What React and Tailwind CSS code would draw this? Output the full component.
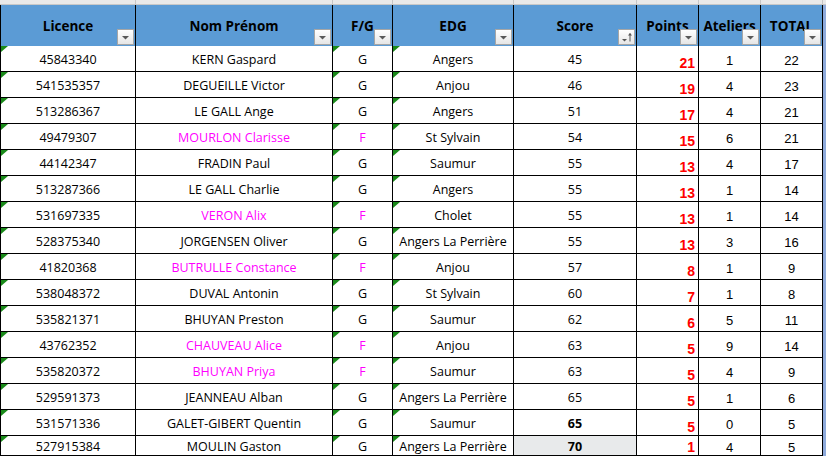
import React from "react";

const rows = [
  ["45843340", "KERN Gaspard", "G", "Angers", "45", "21", "1", "22"],
  ["541535357", "DEGUEILLE Victor", "G", "Anjou", "46", "19", "4", "23"],
  ["513286367", "LE GALL Ange", "G", "Angers", "51", "17", "4", "21"],
  ["49479307", "MOURLON Clarisse", "F", "St Sylvain", "54", "15", "6", "21"],
  ["44142347", "FRADIN Paul", "G", "Saumur", "55", "13", "4", "17"],
  ["513287366", "LE GALL Charlie", "G", "Angers", "55", "13", "1", "14"],
  ["531697335", "VERON Alix", "F", "Cholet", "55", "13", "1", "14"],
  ["528375340", "JORGENSEN Oliver", "G", "Angers La Perrière", "55", "13", "3", "16"],
  ["41820368", "BUTRULLE Constance", "F", "Anjou", "57", "8", "1", "9"],
  ["538048372", "DUVAL Antonin", "G", "St Sylvain", "60", "7", "1", "8"],
  ["535821371", "BHUYAN Preston", "G", "Saumur", "62", "6", "5", "11"],
  ["43762352", "CHAUVEAU Alice", "F", "Anjou", "63", "5", "9", "14"],
  ["535820372", "BHUYAN Priya", "F", "Saumur", "63", "5", "4", "9"],
  ["529591373", "JEANNEAU Alban", "G", "Angers La Perrière", "65", "5", "1", "6"],
  ["531571336", "GALET-GIBERT Quentin", "G", "Saumur", "65", "5", "0", "5"],
  ["527915384", "MOULIN Gaston", "G", "Angers La Perrière", "70", "1", "4", "5"],
];

const grid = "grid grid-cols-[136px_197px_60px_121px_123px_62px_62px_62px]";
const calibri = "font-['Open_Sans',sans-serif] text-[12.5px]";
const arial = "font-['Liberation_Sans',Arial,sans-serif]";

function Tri() {
  return (
    <svg className="absolute left-0 top-0" width="7" height="6" viewBox="0 0 7 6">
      <polygon points="0,0 7,0 0,6" fill="#1a8a1a" />
    </svg>
  );
}

function FilterBtn({ sort }) {
  return (
    <div className="absolute right-[1px] bottom-[1px] w-[17px] h-[16px] border border-[#a6a6a6] bg-gradient-to-b from-white to-[#e6e6e6] flex items-center justify-center">
      {sort ? (
        <svg width="13" height="12" viewBox="0 0 13 12">
          <polygon points="2,8 7,8 4.5,10.5" fill="#555" />
          <line x1="10" y1="2.5" x2="10" y2="10.5" stroke="#555" strokeWidth="1" />
          <polygon points="8,4.5 12,4.5 10,2" fill="#555" />
        </svg>
      ) : (
        <svg width="9" height="6" viewBox="0 0 9 6" className="mt-[2px]">
          <polygon points="1,1 8,1 4.5,4.5" fill="#595959" />
        </svg>
      )}
    </div>
  );
}

const headers = ["Licence", "Nom Prénom", "F/G", "EDG", "Score", "Points", "Ateliers", "TOTAL"];

export default function App() {
  return (
    <div className="w-[826px] h-[457px] overflow-hidden bg-white">
      {/* top column strip */}
      <div className={`${grid} h-[5px] bg-[#e9e9e9] border-b border-[#c8c8c8] w-[826px]`}>
        {headers.map((h, i) => (
          <div key={i} className="border-r border-[#c6c6c6]" />
        ))}
      </div>
      <div className="flex">
        <div className="w-[823px]">
          {/* header */}
          <div className={`${grid} h-[41px] bg-[#5b9bd5]`}>
            {headers.map((h, i) => (
              <div
                key={i}
                className={`relative flex items-center justify-center pt-[2px] overflow-hidden border-r border-black ${i === 0 ? "border-l" : ""} ${calibri} text-[13.5px] font-bold text-black`}
              >
                <span className="whitespace-nowrap">{h}</span>
                <FilterBtn sort={i === 4} />
              </div>
            ))}
          </div>
          {/* body */}
          {rows.map((r, ri) => {
            const last = ri === rows.length - 1;
            const female = r[2] === "F";
            const h = last ? "h-[20px]" : "h-[26px]";
            const cell = `relative border-r border-b border-black ${h} flex justify-center items-center ${last ? "pt-[4px]" : "pt-[4px]"} whitespace-nowrap overflow-hidden`;
            const pink = female ? "text-[#ff00ff]" : "text-black";
            return (
              <div key={ri} className={grid}>
                <div className={`${cell} border-l ${calibri} text-black`}>
                  <Tri />
                  {r[0]}
                </div>
                <div className={`${cell} ${calibri} ${pink}`}>{r[1]}</div>
                <div className={`${cell} ${calibri} ${pink}`}>
                  <Tri />
                  {r[2]}
                </div>
                <div className={`${cell} ${calibri} text-black`}>
                  <Tri />
                  {r[3]}
                </div>
                <div
                  className={`${cell} ${calibri} text-black ${ri >= 14 ? "font-bold" : ""} ${last ? "bg-[#e8eaeb]" : ""}`}
                >
                  {r[4]}
                </div>
                <div
                  className={`relative border-r border-b border-black ${h} flex justify-end items-end pr-[3px] pb-[1px] ${arial} text-[14px] leading-none font-bold text-[#ff0000]`}
                >
                  {r[5]}
                </div>
                <div className={`${cell} ${arial} text-[13px] text-black`}>{r[6]}</div>
                <div className={`${cell} ${arial} text-[13px] text-black`}>{r[7]}</div>
              </div>
            );
          })}
        </div>
        <div className="w-[3px] bg-[#8eaadb]" />
      </div>
    </div>
  );
}
